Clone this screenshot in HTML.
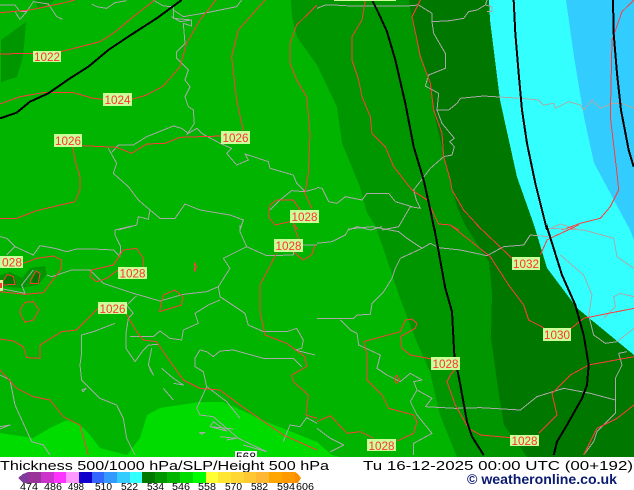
<!DOCTYPE html>
<html><head><meta charset="utf-8"><style>
html,body{margin:0;padding:0;background:#fff;width:634px;height:490px;overflow:hidden}
svg{display:block}
text{font-family:"Liberation Sans",sans-serif}
.g{fill:none;stroke:#a9a9a9;stroke-width:3;stroke-linejoin:round;shape-rendering:crispEdges}
.r{fill:none;stroke:#ff3c3c;stroke-width:3;stroke-linejoin:round;shape-rendering:crispEdges}
.b{fill:none;stroke:#000;stroke-width:6;stroke-linejoin:round;shape-rendering:crispEdges}
.lab rect{fill:#ccff99}
.lab text{fill:#ff3333;font-size:12px}
.n text{font-size:10px;fill:#000}
</style></head><body>
<svg width="634" height="490" viewBox="0 0 634 490" xmlns="http://www.w3.org/2000/svg">
<defs><clipPath id="m"><rect x="0" y="0" width="634" height="457"/></clipPath></defs>
<g clip-path="url(#m)">
<g shape-rendering="crispEdges">
<rect x="0" y="0" width="634" height="457" fill="#00b400"/>
<path fill="#00dc00" d="M0 433 33 438 50 428 67 420 80 425 90 435 100 448 127 455 140 438 147 415 160 408 200 402 223 402 267 422 317 442 332 455 340 457 0 457Z"/>
<path fill="#009600" d="M291 0 292 17 297 37 317 65 337 107 342 143 360 187 367 213 375 225 389 265 400 298 415 338 430 372 440 415 457 457 634 457 634 0Z"/>
<path fill="#009600" d="M1 40 26 22 23 57 17 77 1 82ZM35 0 55 0 50 4 38 8Z"/>
<path fill="#007800" d="M409 0 412 20 417 43 425 67 430 90 437 127 447 167 457 207 465 225 489 262 492 292 491 338 499 395 504 425 527 457 634 457 634 0Z"/>
<path fill="#33ffff" d="M489 0 490 20 500 100 517 177 534 225 547 268 577 308 634 355 634 0Z"/>
<path fill="#33ccff" d="M566 0 574 57 584 117 594 163 614 200 630 230 634 240 634 0Z"/>
<path fill="#009600" d="M0 275 10 272 22 278 30 268 45 266 47 274 38 285 20 288 0 286Z"/>
<path fill="#007800" d="M3 279 8 274 14 276 16 284 3 285ZM32 280 36 272 40 274 40 282 34 284Z"/>
</g>
<!-- borders -->
<g transform="scale(.33333)">
<path class="g" d="M0 15 45 15 60 35 80 35 100 5 145 12 170 50 188 58M45 35 60 58 80 35M275 12 290 20 320 25 345 8 380 2M460 0 490 18 520 20 520 55 575 60 575 78 550 70 555 130 530 155 530 175 565 210 555 240 570 260 555 290 565 320 580 330 583 370 560 405M515 50 540 65 575 60M520 30 550 50 620 38 710 20 725 0M325 445 350 490 340 520 385 560 415 600 450 630 480 655 525 655 555 612 600 630 690 645 730 660 720 690M335 458 355 435 400 435 440 410 520 378 545 385 565 400 590 385 605 400 660 430 695 445 680 460 710 495 745 480 735 462 805 485 810 505 880 525 890 550 915 575 875 572 840 600 810 630M915 575 951 565M355 690 410 675 415 650 445 658 450 630"/>
<path class="r" d="M0 38 90 30 195 8 225 0M0 162 100 160M183 155 300 125 340 100 400 50 465 0M0 312 60 290 130 278 220 278 280 295 310 298M395 298 440 285 490 258 540 200 560 130 600 60 648 0M0 655 50 655 110 632 160 620 225 605 240 570 240 530 225 480 218 440M245 437 350 442 395 460 440 432 495 430 540 412 665 408M730 392 710 300 695 170 715 90 795 0M951 15 890 75 870 130 870 190 890 240 920 290 930 400 925 520 915 580 935 625M870 665 825 675 805 650 810 615 830 600 880 600 900 630M880 670 895 690"/>
<path class="b" d="M0 355 50 338 90 305 145 280 210 235 265 200 325 150 400 100 470 55 545 0"/>
</g>
<g transform="translate(317 0) scale(.33333)">
<path class="g" d="M0 25 25 15 50 15 100 18 270 18 305 15 345 40 345 65 400 62 440 55 455 35 480 30 505 15 510 0M505 15 525 20 525 35 510 35M345 65 350 100 385 160 385 205 335 225 325 258 365 280 360 330 375 370 412 415 398 425 412 440 405 465 380 470 340 505 290 570 298 600 310 625 280 620 245 680 195 690M360 330 395 330 420 310 430 295 500 288 610 295 665 300 680 315 710 310 715 325 755 305 790 315 800 330 825 300 850 325 885 310 915 310 951 325M0 562 15 565 35 605 60 610 85 590 135 600 150 580 215 580 235 605 285 620M95 690 120 680 160 690 195 680M690 690 730 672 785 690"/>
<path class="r" d="M145 0 135 60 105 110 105 180 125 240 135 290 160 350 165 400 205 440 230 500 285 570 330 600 365 672 400 675 425 690M310 0 285 50 300 120 310 170 340 250 350 330 375 400 380 470 400 540 405 570 440 630 495 690M951 0 915 35 885 120 880 350 900 520 905 570 880 620 850 655 790 670 735 690"/>
<path class="b" d="M165 0 185 40 210 95 235 180 265 310 290 440 320 540 340 630 352 690M590 0 595 100 605 220 615 330 630 430 655 550 690 690M888 0 890 100 900 220 912 330 935 450 950 500"/>
</g>
<g transform="translate(0 225) scale(.33333)">
<path class="g" d="M0 35 20 40 45 65 20 90M45 65 100 90 120 62 165 70 200 80 230 72 280 72 340 75 360 95M345 30 345 15 400 2M345 30 362 65 360 95M100 135 65 180 75 205 0 190M140 150 155 155 215 135 270 135 310 175 400 205 480 228 550 208 620 200 655 185M655 185 690 130 670 100 740 65 720 20 720 0M740 65 800 92 880 90 880 60 951 60M655 185 660 215 690 235 735 265 745 300 790 320 860 320 890 310 910 345 905 370 885 375 945 390M660 225 625 240 585 265 595 295 550 315 545 345 510 340 480 318 460 335 390 335M410 212 380 240 400 265 385 280 378 325 378 370 405 410 430 375 445 360 475 358M345 295 280 320 245 330 245 385 240 420 245 465 300 520 350 540 370 580 380 640 405 690M245 495 258 490 250 500 245 495M455 370 445 420 460 450 448 430M485 430 520 460 550 480 520 475M490 490 520 525M600 375 585 400 585 425 610 440 620 485 680 530 720 580M600 375 620 380 640 395 660 378 700 375 790 400 880 400 905 425M620 485 590 550 600 570 640 575 715 640 800 680M630 605 680 618 640 590 630 605 700 612M660 635 710 640 680 645M730 660 800 680M598 622 615 622 605 628 598 622M0 450 30 465 45 540 70 595 95 650 130 660 150 690M0 605 30 600 0 612M850 650 870 600 900 605 920 578 951 595"/>
<path class="r" d="M0 200 75 208 130 203 185 130 185 105 160 93 110 100 70 115M10 180 45 178 40 155 22 148 8 170 10 180M90 175 115 175 120 145 108 138 92 165 90 175M60 255 75 232 100 230 117 255 100 285 75 292 60 265 60 255M355 135 320 160 290 170 270 155 275 135 340 120 370 75 410 70 430 100 430 125M830 85 780 180 780 260 795 330 860 355 915 395 920 425 875 450 880 470 925 510 918 570 951 580M880 0 895 40 885 85 910 105 935 90 945 60M295 250 265 280 230 315 185 320 120 360 120 400 80 398 70 365 40 348 0 342M378 265 410 320 430 345 470 350 500 395 550 465 600 490 660 495 720 540 850 630 951 675M0 435 50 490 100 515 150 525 190 575 240 600 265 690M478 260 490 210 525 195 548 215 545 240 478 260M583 112 590 125 583 140 583 112"/>
</g>
<g transform="translate(317 225) scale(.33333)">
<path class="g" d="M0 55 45 50 85 30 95 12 165 5 245 20 270 40 315 70 250 100 235 130 225 160 200 200 165 235 160 268 120 270 110 280 0 280M315 70 340 55 365 68 430 75 510 92 560 65 620 60 640 30 695 35M730 90 800 150 825 210 815 270 830 330 865 355 900 350 951 310M700 10 800 15 890 40 900 95 950 130M890 215 910 205 951 215M890 215 895 245 860 280M70 285 100 315 120 325 125 360 190 390 180 430 210 450 250 470 280 445 315 465 290 470 300 495 345 520 325 545 415 550 490 548 610 555 660 515 740 490 820 505 895 525 895 565 840 620 830 650 800 690M895 525 895 460 915 420 905 385 930 380M300 495 280 530 300 570 345 625 290 655 290 690M0 610 40 640 80 660 40 680"/>
<path class="r" d="M480 0 585 100M670 90 690 45 710 35 785 0M400 0 520 95 575 180 620 240 635 285 680 308M760 312 800 280 850 270 951 250M345 402 280 390 255 370 250 335 295 310 300 295 285 282 265 285 250 320 140 350 150 390 150 465 195 510 215 550 290 570 300 590 290 625 240 648M430 415 400 450 390 470 415 540 455 610 490 630 580 638M665 625 720 570 705 505 760 450 815 420 951 395M0 590 40 572 90 625 130 620 170 640M800 690 840 610 900 580 951 540M240 450 232 462 238 475 247 465 240 450"/>
<path class="b" d="M350 0 365 80 385 190 405 260 412 390 430 480 450 590 465 635 500 690M688 0 710 70 735 150 775 240 800 330 815 420 810 480 795 520 750 600 720 650 710 690"/>
</g>
<!-- labels -->
<g class="lab">
<rect x="33" y="51" width="28" height="11"/><text x="34" y="61" textLength="26" lengthAdjust="spacingAndGlyphs">1022</text>
<rect x="103" y="93" width="29" height="13"/><text x="104.500" y="104" textLength="26" lengthAdjust="spacingAndGlyphs">1024</text>
<rect x="54" y="134" width="28" height="13"/><text x="55" y="145" textLength="26" lengthAdjust="spacingAndGlyphs">1026</text>
<rect x="221" y="131" width="29" height="13"/><text x="222.500" y="142" textLength="26" lengthAdjust="spacingAndGlyphs">1026</text>
<rect x="290" y="210" width="29" height="13"/><text x="291.500" y="221" textLength="26" lengthAdjust="spacingAndGlyphs">1028</text>
<rect x="118" y="267" width="29" height="12"/><text x="119.500" y="277.500" textLength="26" lengthAdjust="spacingAndGlyphs">1028</text>
<rect x="274" y="239" width="29" height="13"/><text x="275.500" y="250" textLength="26" lengthAdjust="spacingAndGlyphs">1028</text>
<rect x="98" y="302" width="29" height="12"/><text x="99.500" y="313" textLength="26" lengthAdjust="spacingAndGlyphs">1026</text>
<rect x="0" y="256" width="23" height="12"/><text x="2" y="266.500" textLength="20" lengthAdjust="spacingAndGlyphs">028</text>
<rect x="0" y="280" width="3" height="11"/><rect x="0" y="283" width="2" height="5" style="fill:#ff3333"/>
<rect x="512" y="257" width="28" height="13"/><text x="513" y="268" textLength="26" lengthAdjust="spacingAndGlyphs">1032</text>
<rect x="543" y="328" width="28" height="13"/><text x="544" y="339" textLength="26" lengthAdjust="spacingAndGlyphs">1030</text>
<rect x="431" y="357" width="29" height="13"/><text x="432.500" y="368" textLength="26" lengthAdjust="spacingAndGlyphs">1028</text>
<rect x="367" y="439" width="29" height="12"/><text x="368.500" y="450" textLength="26" lengthAdjust="spacingAndGlyphs">1028</text>
<rect x="510" y="435" width="29" height="11"/><text x="511.500" y="445" textLength="26" lengthAdjust="spacingAndGlyphs">1028</text>
<rect x="334" y="0" width="62" height="1"/>
</g>
<rect x="235" y="451" width="22" height="6" fill="#fff"/>
<text x="236" y="461" font-size="12" fill="#000" textLength="20" lengthAdjust="spacingAndGlyphs">568</text>
</g>
<!-- footer -->
<text x="0" y="470" font-size="12.500" fill="#000" textLength="329" lengthAdjust="spacingAndGlyphs">Thickness 500/1000 hPa/SLP/Height 500 hPa</text>
<text x="363" y="470" font-size="12.500" fill="#000" textLength="270" lengthAdjust="spacingAndGlyphs">Tu 16-12-2025 00:00 UTC (00+192)</text>
<text x="467" y="484" font-size="13.500" font-weight="bold" fill="#0a1a70" textLength="150" lengthAdjust="spacingAndGlyphs">© weatheronline.co.uk</text>
<!-- legend -->
<g shape-rendering="crispEdges">
<path fill="#803c9c" d="M28 472 28 483 23 483 18 478 23 474Z"/>
<rect x="28" y="472" width="13" height="11" fill="#993399"/>
<rect x="41" y="472" width="13" height="11" fill="#cc33cc"/>
<rect x="54" y="472" width="12" height="11" fill="#ff33ff"/>
<rect x="66" y="472" width="13" height="11" fill="#ff99ff"/>
<rect x="79" y="472" width="13" height="11" fill="#1100cc"/>
<rect x="92" y="472" width="12" height="11" fill="#3366ff"/>
<rect x="104" y="472" width="13" height="11" fill="#3399ff"/>
<rect x="117" y="472" width="13" height="11" fill="#33ccff"/>
<rect x="130" y="472" width="12" height="11" fill="#33ffff"/>
<rect x="142" y="472" width="13" height="11" fill="#007800"/>
<rect x="155" y="472" width="12" height="11" fill="#009600"/>
<rect x="167" y="472" width="13" height="11" fill="#00b400"/>
<rect x="180" y="472" width="13" height="11" fill="#00dc00"/>
<rect x="193" y="472" width="13" height="11" fill="#00ff00"/>
<rect x="206" y="472" width="12" height="11" fill="#ffff33"/>
<rect x="218" y="472" width="13" height="11" fill="#ffe633"/>
<rect x="231" y="472" width="13" height="11" fill="#ffd633"/>
<rect x="244" y="472" width="12" height="11" fill="#ffc833"/>
<rect x="256" y="472" width="13" height="11" fill="#ffb833"/>
<rect x="269" y="472" width="13" height="11" fill="#ffa500"/>
<rect x="282" y="472" width="13" height="11" fill="#ff9900"/>
<path fill="#ff8c00" d="M295 472 295 483 298 483 301 478 298 474Z"/>
</g>
<g class="n">
<text x="20" y="490" textLength="18" lengthAdjust="spacingAndGlyphs">474</text>
<text x="44" y="490" textLength="18" lengthAdjust="spacingAndGlyphs">486</text>
<text x="68" y="490" textLength="16" lengthAdjust="spacingAndGlyphs">498</text>
<text x="95" y="490" textLength="17" lengthAdjust="spacingAndGlyphs">510</text>
<text x="121" y="490" textLength="17" lengthAdjust="spacingAndGlyphs">522</text>
<text x="147" y="490" textLength="17" lengthAdjust="spacingAndGlyphs">534</text>
<text x="172" y="490" textLength="18" lengthAdjust="spacingAndGlyphs">546</text>
<text x="198" y="490" textLength="18" lengthAdjust="spacingAndGlyphs">558</text>
<text x="225" y="490" textLength="17" lengthAdjust="spacingAndGlyphs">570</text>
<text x="251" y="490" textLength="17" lengthAdjust="spacingAndGlyphs">582</text>
<text x="277" y="490" textLength="18" lengthAdjust="spacingAndGlyphs">594</text>
<text x="296" y="490" textLength="18" lengthAdjust="spacingAndGlyphs">606</text>
</g>
</svg>
</body></html>
